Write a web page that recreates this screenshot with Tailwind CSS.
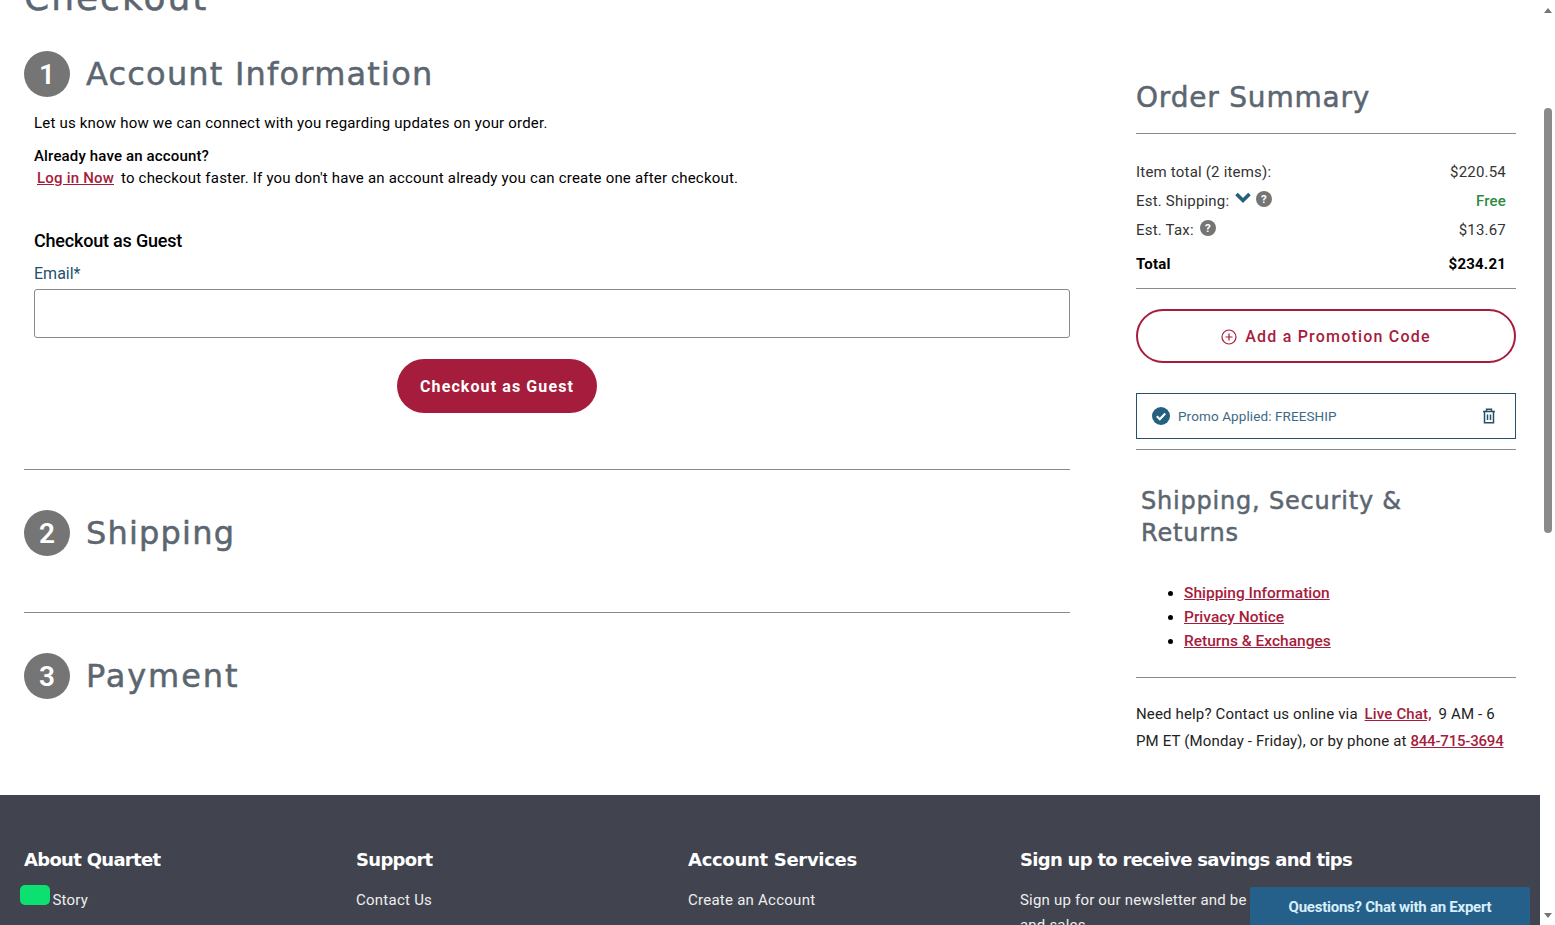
<!DOCTYPE html>
<html lang="en">
<head>
    <meta charset="UTF-8">
    <meta name="viewport" content="width=device-width, initial-scale=1.0">
    <title>Checkout</title>
    <script src="https://cdn.jsdelivr.net/npm/@tailwindcss/browser@4"></script>
</head>
<body class="bg-white font-['Roboto',sans-serif] text-black">
<div class="relative flex h-[925px] w-[1555px] overflow-hidden">
    <!-- page -->
    <div class="w-[1540px] shrink-0">
        <div class="flex h-[795px] items-start">
            <!-- left column -->
            <div class="ml-6 w-[1046px]">
                <h1 class="-mt-[22px] h-[73px] font-['DejaVu_Sans',sans-serif] text-[36px] leading-[40px] tracking-[2px] text-[#5b6670] [-webkit-text-stroke:0.5px_#5b6670]">Checkout</h1>

                <div class="flex h-[46px] items-center gap-4">
                    <span class="flex size-[46px] items-center justify-center rounded-full bg-[#757575] pt-[2px] text-[28px] font-semibold text-white">1</span>
                    <h2 class="font-['DejaVu_Sans',sans-serif] text-[32px] tracking-[1.2px] text-[#5b6670] [-webkit-text-stroke:0.5px_#5b6670]">Account Information</h2>
                </div>
                <div class="px-2.5">
                    <p class="mt-4 text-[15px] leading-5 tracking-[0.2px]">Let us know how we can connect with you regarding updates on your order.</p>
                    <p class="mt-3 text-[15px] leading-[22px] font-medium tracking-[0.15px]">Already have an account?</p>
                    <p class="text-[15px] leading-[22px] tracking-[0.2px]"><a href="#" class="ml-[3px] mr-[3px] font-medium text-[#a61c3c] underline">Log in Now</a> to checkout faster. If you don't have an account already you can create one after checkout.</p>
                    <h3 class="mt-10 text-[18px] leading-6 font-medium tracking-[-0.2px]">Checkout as Guest</h3>
                    <label class="mt-[11px] block text-[16px] leading-5 text-[#24506b]">Email*</label>
                    <input type="text" class="mt-[5px] block h-[49px] w-[1036px] rounded-[3px] border border-[#8a8a8a] bg-white">
                    <button class="mt-[21px] ml-[363px] block h-[54px] w-[200px] rounded-full bg-[#a61c3c] pt-[2px] text-[16px] font-bold tracking-[1.1px] text-white">Checkout as Guest</button>
                </div>
                <hr class="mt-14 border-[#8a8a8a]">
                <div class="mt-[40px] flex h-[46px] items-center gap-4">
                    <span class="flex size-[46px] items-center justify-center rounded-full bg-[#757575] pt-[2px] text-[28px] font-semibold text-white">2</span>
                    <h2 class="font-['DejaVu_Sans',sans-serif] text-[32px] tracking-[1.2px] text-[#5b6670] [-webkit-text-stroke:0.5px_#5b6670]">Shipping</h2>
                </div>
                <hr class="mt-[56px] border-[#8a8a8a]">
                <div class="mt-[40px] flex h-[46px] items-center gap-4">
                    <span class="flex size-[46px] items-center justify-center rounded-full bg-[#757575] pt-[2px] text-[28px] font-semibold text-white">3</span>
                    <h2 class="font-['DejaVu_Sans',sans-serif] text-[32px] tracking-[1.9px] text-[#5b6670] [-webkit-text-stroke:0.5px_#5b6670]">Payment</h2>
                </div>
            </div>

            <!-- order summary -->
            <aside class="ml-[66px] w-[380px]">
                <h2 class="mt-[78px] h-10 font-['DejaVu_Sans',sans-serif] text-[28px] leading-10 tracking-[0.8px] text-[#5b6670] [-webkit-text-stroke:0.5px_#5b6670]">Order Summary</h2>
                <hr class="mt-[15px] border-[#8a8a8a]">
                <div class="pr-2.5 text-[15px] tracking-[0.2px] text-[#333]">
                    <div class="mt-[28px] flex h-5 items-center justify-between"><span>Item total (2 items):</span><span>$220.54</span></div>
                    <div class="mt-[9px] flex h-5 items-center justify-between">
                        <span class="flex items-center gap-[5px]">Est. Shipping:
                            <svg class="ml-px size-4 -translate-y-[3px]" viewBox="0 0 16 16" fill="none" stroke="#24607f" stroke-width="3.6"><path d="M1.500 4 8 10.500 14.500 4"/></svg>
                            <svg class="size-4 -translate-y-0.5" viewBox="0 0 16 16"><circle cx="8" cy="8" r="8" fill="#757575"/><text x="8" y="12" text-anchor="middle" font-size="11.500" font-weight="700" fill="#fff">?</text></svg>
                        </span>
                        <span class="font-medium text-[#2f8a43]">Free</span>
                    </div>
                    <div class="mt-[9px] flex h-5 items-center justify-between">
                        <span class="flex items-center gap-[6px]">Est. Tax:
                            <svg class="size-4 -translate-y-0.5" viewBox="0 0 16 16"><circle cx="8" cy="8" r="8" fill="#757575"/><text x="8" y="12" text-anchor="middle" font-size="11.500" font-weight="700" fill="#fff">?</text></svg>
                        </span>
                        <span>$13.67</span>
                    </div>
                    <div class="mt-3.5 flex h-5 items-center justify-between font-bold text-black"><span>Total</span><span>$234.21</span></div>
                </div>
                <hr class="mt-[14px] border-[#8a8a8a]">
                <button class="mt-5 flex h-[54px] w-full items-center justify-center gap-2 rounded-full border-2 border-[#a61c3c] pt-[2px] text-[16px] font-medium tracking-[1.2px] text-[#a61c3c]">
                    <svg class="size-4" viewBox="0 0 16 16" fill="none" stroke="#a61c3c" stroke-width="1.200"><circle cx="8" cy="8" r="7"/><path d="M8 4.500v7M4.500 8h7"/></svg>
                    Add a Promotion Code
                </button>
                <div class="mt-[30px] flex h-[46px] items-center justify-between border border-[#24506b] pr-[19px] pl-[15px]">
                    <span class="flex items-center gap-2 text-[13.500px] tracking-[0.1px] text-[#3d6a85]">
                        <svg class="size-[18px]" viewBox="0 0 18 18"><circle cx="9" cy="9" r="9" fill="#24607f"/><path d="M4.800 9.300 7.800 12.200 13.200 6.500" fill="none" stroke="#fff" stroke-width="2.200"/></svg>
                        Promo Applied: FREESHIP
                    </span>
                    <svg class="h-4 w-[14px]" viewBox="0 0 14 16" fill="none" stroke="#24506b" stroke-width="1.500"><path d="M1 3.500h12M4.500 3.500V1.200h5v2.300M2.500 3.500v11.300h9V3.500M5.500 6.500v5.500M8.500 6.500v5.500"/></svg>
                </div>
                <hr class="mt-2.5 border-[#8a8a8a]">
                <h2 class="mt-[35px] ml-[5px] w-[300px] font-['DejaVu_Sans',sans-serif] text-[24px] leading-8 tracking-[0.8px] text-[#5b6670] [-webkit-text-stroke:0.5px_#5b6670]">Shipping, Security &amp; Returns</h2>
                <ul class="mt-[32px] ml-12 list-disc text-[15.500px] leading-6 font-medium text-[#a61c3c]">
                    <li class="marker:text-black"><a href="#" class="underline">Shipping Information</a></li>
                    <li class="marker:text-black"><a href="#" class="underline">Privacy Notice</a></li>
                    <li class="marker:text-black"><a href="#" class="underline">Returns &amp; Exchanges</a></li>
                </ul>
                <hr class="mt-[24px] border-[#8a8a8a]">
                <p class="mt-[23px] text-[15px] leading-[27px] tracking-[0.15px] text-[#222]">Need help? Contact us online via <a href="#" class="mx-[3px] font-medium text-[#a61c3c] underline">Live Chat,</a> 9 AM - 6 PM ET (Monday - Friday), or by phone at <a href="#" class="font-medium tracking-[-0.2px] text-[#a61c3c] underline">844-715-3694</a></p>
            </aside>
        </div>

        <!-- footer -->
        <footer class="h-[130px] overflow-hidden bg-[#41444f] pt-[53px] pl-6 text-white">
            <div class="grid grid-cols-[332px_332px_332px_1fr]">
                <div>
                    <h4 class="font-['DejaVu_Sans',sans-serif] text-[18px] leading-6 font-bold tracking-[-0.7px]">About Quartet</h4>
                    <a href="#" class="mt-[18px] block text-[15px] leading-5 tracking-[0.25px] text-[#eee]">Our Story</a>
                </div>
                <div>
                    <h4 class="font-['DejaVu_Sans',sans-serif] text-[18px] leading-6 font-bold tracking-[-0.7px]">Support</h4>
                    <a href="#" class="mt-[18px] block text-[15px] leading-5 tracking-[0.25px] text-[#eee]">Contact Us</a>
                </div>
                <div>
                    <h4 class="font-['DejaVu_Sans',sans-serif] text-[18px] leading-6 font-bold tracking-[-0.3px]">Account Services</h4>
                    <a href="#" class="mt-[18px] block text-[15px] leading-5 tracking-[0.25px] text-[#eee]">Create an Account</a>
                </div>
                <div>
                    <h4 class="font-['DejaVu_Sans',sans-serif] text-[18px] leading-6 font-bold tracking-[-0.7px]">Sign up to receive savings and tips</h4>
                    <p class="mt-4 w-[490px] text-[15px] leading-[25px] tracking-[0.2px] text-[#eee]">Sign up for our newsletter and be the first to hear about new arrivals and sales</p>
                </div>
            </div>
        </footer>
    </div>

    <!-- scrollbar -->
    <div class="flex w-[15px] shrink-0 flex-col items-center bg-white">
        <div class="mt-[8px] h-0 w-0 border-x-[4px] border-b-[5px] border-x-transparent border-b-[#777]"></div>
        <div class="mt-[95px] h-[425px] w-[8px] rounded-full bg-[#8a8a8a]"></div>
        <div class="mt-[380px] h-0 w-0 border-x-[4px] border-t-[5px] border-x-transparent border-t-[#777]"></div>
    </div>

    <!-- floating widgets -->
    <div class="absolute top-[885px] left-5 h-[20px] w-[30px] rounded-[5px] bg-[#0be071]"></div>
    <div class="absolute top-[887px] left-[1250px] flex h-[38px] w-[280px] items-center justify-center rounded-t-[2px] bg-[#25608a] pt-[2px] text-[15px] font-bold tracking-[-0.25px] text-[#d8eef8]">Questions? Chat with an Expert</div>
</div>
</body>
</html>
